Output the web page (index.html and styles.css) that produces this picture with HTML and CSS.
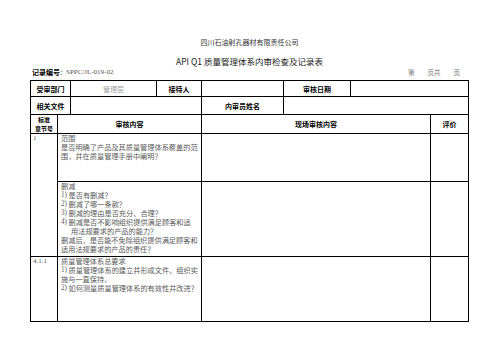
FILE: index.html
```html
<!DOCTYPE html>
<html lang="zh">
<head>
<meta charset="utf-8">
<title>API Q1 质量管理体系内审检查及记录表</title>
<link rel="stylesheet" href="styles.css">
</head>
<body>
<div class="page">
  <div class="company">四川石油射孔器材有限责任公司</div>
  <div class="title">API Q1 质量管理体系内审检查及记录表</div>
  <div class="meta">
    <div class="code"><span class="lbl">记录编号</span><span class="colon">：</span><span class="num">SPPC/JL-019-02</span></div>
    <div class="pageno"><span>第</span><span>页共</span><span>页</span></div>
  </div>
  <div class="sheet">
    <div class="cell s2 lbl center">受审部门</div>
    <div class="cell gray center">管理层</div>
    <div class="cell lbl center">接待人</div>
    <div class="cell"></div>
    <div class="cell lbl center">审核日期</div>
    <div class="cell s2"></div>

    <div class="cell s2 lbl center">相关文件</div>
    <div class="cell s2"></div>
    <div class="cell lbl center">内审员姓名</div>
    <div class="cell s3"></div>

    <div class="cell lbl stack"><span>标准</span><span>章节号</span></div>
    <div class="cell s3 lbl center">审核内容</div>
    <div class="cell s3 lbl center">现场审核内容</div>
    <div class="cell lbl center">评价</div>

    <div class="cell r2 clause">1</div>
    <div class="cell s3 body">
      <div>范围</div>
      <div>是否明确了产品及其质量管理体系覆盖的范</div>
      <div>围，并在质量管理手册中阐明？</div>
    </div>
    <div class="cell s3"></div>
    <div class="cell"></div>

    <div class="cell s3 body">
      <div>删减</div>
      <div><span class="n">1)</span>是否有删减？</div>
      <div><span class="n">2)</span>删减了哪一条款？</div>
      <div><span class="n">3)</span>删减的理由是否充分、合理？</div>
      <div><span class="n">4)</span>删减是否不影响组织提供满足顾客和适</div>
      <div class="indent">用法规要求的产品的能力？</div>
      <div>删减后，是否能不免除组织提供满足顾客和</div>
      <div>适用法规要求的产品的责任？</div>
    </div>
    <div class="cell s3"></div>
    <div class="cell"></div>

    <div class="cell clause">4.1.1</div>
    <div class="cell s3 body">
      <div>质量管理体系总要求</div>
      <div><span class="n">1)</span>质量管理体系的建立并形成文件、组织实</div>
      <div>施与一直保持。</div>
      <div><span class="n">2)</span>如何测量质量管理体系的有效性并改进？</div>
    </div>
    <div class="cell s3"></div>
    <div class="cell"></div>
  </div>
</div>
</body>
</html>
```

FILE: styles.css
```css
html, body {
  margin: 0;
  padding: 0;
  background: #ffffff;
}

body {
  font-family: "Noto Sans CJK SC", "Noto Sans", sans-serif;
  color: #222;
}

.page {
  width: 439px;
  padding: 36px 0 0 30px;
}

.company {
  text-align: center;
  font-size: 7px;
  line-height: 12px;
  height: 12px;
  color: #333;
}

.title {
  margin-top: 7px;
  text-align: center;
  font-size: 8.5px;
  line-height: 12px;
  height: 12px;
  color: #222;
}

.meta {
  display: flex;
  justify-content: space-between;
  align-items: center;
  height: 10px;
  margin-bottom: 3px;
  font-size: 7px;
  line-height: 10px;
}

.code {
  padding-left: 2px;
  display: flex;
  align-items: center;
}

.code .lbl {
  font-weight: bold;
  color: #000;
}

.code .colon {
  color: #666;
  width: 4px;
}

.code .num {
  font-family: "Liberation Serif", serif;
  color: #555;
  font-size: 7px;
  padding-left: 2px;
}

.pageno {
  display: flex;
  gap: 13px;
  padding-right: 9px;
  color: #777;
  font-size: 6.5px;
}

.sheet {
  display: grid;
  grid-template-columns: 26px 12px 85px 44px 81px 66px 79px 37px;
  grid-template-rows: 15px 17px 18px 47px 74px 64px;
  gap: 1px;
  padding: 1px;
  background: #000;
  width: max-content;
}

.cell {
  background: #fff;
  overflow: hidden;
}

.s2 { grid-column: span 2; }
.s3 { grid-column: span 3; }
.r2 { grid-row: span 2; }

.lbl {
  font-weight: bold;
  font-size: 7px;
  color: #000;
}

.center {
  display: flex;
  align-items: center;
  justify-content: center;
  text-align: center;
  line-height: 8px;
}

.stack {
  display: flex;
  flex-direction: column;
  align-items: center;
  justify-content: center;
  font-size: 6px;
}

.stack span {
  display: block;
  height: 9px;
  line-height: 9px;
}

.gray {
  font-size: 7px;
  color: #a0a0a0;
}

.clause {
  font-family: "Liberation Serif", serif;
  font-size: 7px;
  line-height: 9px;
  color: #555;
  padding-left: 2px;
}

.body {
  font-size: 7.2px;
  line-height: 9px;
  color: #5a5a5a;
  padding-left: 3px;
  white-space: nowrap;
}

.body > div {
  height: 9px;
  line-height: 9px;
  overflow: visible;
}

.body .n {
  display: inline-block;
  width: 7.5px;
  height: 9px;
  line-height: 9px;
  vertical-align: top;
  font-family: "Liberation Serif", serif;
}

.body .indent {
  padding-left: 10px;
}
```
